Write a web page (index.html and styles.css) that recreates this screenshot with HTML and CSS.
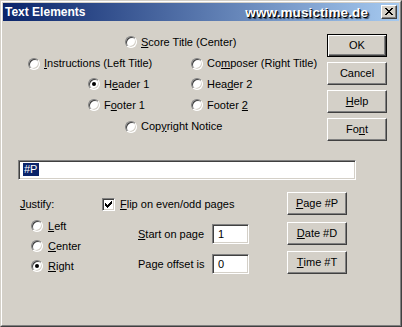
FILE: index.html
```html
<!DOCTYPE html>
<html lang="de">
<head>
    <meta charset="UTF-8">
    <meta name="viewport" content="width=device-width, initial-scale=1.0">
    <title>Text Elements</title>
    <link rel="stylesheet" href="styles.css">
</head>
<body>
    <div class="window">
        <div class="frame">
            <div class="title-bar">
                <span class="title">Text Elements</span>
                <span class="brand">www.musictime.de</span>
                <span class="close-btn">
                    <svg width="8" height="7" viewBox="0 0 8 7" shape-rendering="crispEdges">
                        <path d="M0 0h2v1h-2zM6 0h2v1h-2zM1 1h2v1h-2zM5 1h2v1h-2zM2 2h4v1h-4zM3 3h2v1h-2zM2 4h4v1h-4zM1 5h2v1h-2zM5 5h2v1h-2zM0 6h2v1h-2zM6 6h2v1h-2z" fill="#000"/>
                    </svg>
                </span>
            </div>

            <div class="client">
                <div class="top">
                    <div class="choices">
                        <label class="choice score"><span class="radio"></span><span><u>S</u>core Title (Center)</span></label>
                        <label class="choice instructions"><span class="radio"></span><span><u>I</u>nstructions (Left Title)</span></label>
                        <label class="choice composer"><span class="radio"></span><span>Co<u>m</u>poser (Right Title)</span></label>
                        <label class="choice header1"><span class="radio checked"></span><span>H<u>e</u>ader 1</span></label>
                        <label class="choice header2"><span class="radio"></span><span>Hea<u>d</u>er 2</span></label>
                        <label class="choice footer1"><span class="radio"></span><span>F<u>o</u>oter 1</span></label>
                        <label class="choice footer2"><span class="radio"></span><span>Footer <u>2</u></span></label>
                        <label class="choice copyright"><span class="radio"></span><span>Cop<u>y</u>right Notice</span></label>
                    </div>
                    <div class="actions">
                        <span class="btn default">OK</span>
                        <span class="btn">Cancel</span>
                        <span class="btn"><u>H</u>elp</span>
                        <span class="btn">Fo<u>n</u>t</span>
                    </div>
                </div>

                <div class="text-field"><span class="selection">#P</span></div>

                <div class="bottom">
                    <div class="justify">
                        <div class="group-label"><u>J</u>ustify:</div>
                        <label class="choice"><span class="radio"></span><span><u>L</u>eft</span></label>
                        <label class="choice"><span class="radio"></span><span><u>C</u>enter</span></label>
                        <label class="choice"><span class="radio checked"></span><span><u>R</u>ight</span></label>
                    </div>
                    <div class="options">
                        <label class="check-row">
                            <span class="checkbox">
                                <svg width="9" height="9" viewBox="0 0 9 9" shape-rendering="crispEdges">
                                    <path d="M1 3h1v3h-1zM2 4h1v3h-1zM3 5h1v3h-1zM4 4h1v3h-1zM5 3h1v3h-1zM6 2h1v3h-1zM7 1h1v3h-1z" fill="#000"/>
                                </svg>
                            </span>
                            <span><u>F</u>lip on even/odd pages</span>
                        </label>
                        <div class="field-row">
                            <span class="field-label"><u>S</u>tart on page</span>
                            <span class="small-field">1</span>
                        </div>
                        <div class="field-row">
                            <span class="field-label">Page offset is</span>
                            <span class="small-field">0</span>
                        </div>
                    </div>
                    <div class="stamps">
                        <span class="btn"><u>P</u>age #P</span>
                        <span class="btn"><u>D</u>ate #D</span>
                        <span class="btn"><u>T</u>ime #T</span>
                    </div>
                </div>
            </div>
        </div>
    </div>
</body>
</html>
```

FILE: styles.css
```css
body {
    margin: 0;
    padding: 0;
    background-color: #d4d0c8;
    font-family: "Liberation Sans", Arial, sans-serif;
    font-size: 11px;
    line-height: 13px;
    color: #000;
}

u {
    text-decoration-thickness: 1px;
    text-underline-offset: 1px;
}

/* window frame */
.window {
    width: 402px;
    height: 327px;
    box-sizing: border-box;
    border: 1px solid;
    border-color: #d4d0c8 #404040 #404040 #d4d0c8;
    background-color: #d4d0c8;
}
.frame {
    height: 100%;
    box-sizing: border-box;
    border: 1px solid;
    border-color: #fff #808080 #808080 #fff;
    padding: 1px;
    display: flex;
    flex-direction: column;
}
.title-bar {
    height: 18px;
    flex-shrink: 0;
    display: flex;
    align-items: center;
    padding: 0 2px;
    background: linear-gradient(to right, #0a246a, #a6caf0);
}
.title {
    color: #fff;
    font-weight: bold;
    font-size: 12px;
}
.brand {
    margin-left: auto;
    margin-right: 13px;
    color: #fff;
    font-weight: bold;
    font-size: 13.5px;
    letter-spacing: 0.1px;
    text-shadow: 1px 1px 0 #000, 2px 2px 1px rgba(0, 0, 0, 0.6);
}
.close-btn {
    width: 16px;
    height: 14px;
    box-sizing: border-box;
    display: flex;
    align-items: center;
    justify-content: center;
    background-color: #d4d0c8;
    border: 1px solid;
    border-color: #fff #404040 #404040 #fff;
    box-shadow: inset -1px -1px #808080;
    padding: 0 1px 1px 0;
}

/* client area */
.client {
    flex: 1;
}
.top {
    display: flex;
    align-items: flex-start;
}
.choices {
    display: grid;
    margin: 10px 0 0 25px;
    grid-template-columns: 60px 37px 66px auto;
    grid-template-rows: 22px 21px 20px 22px 21px;
}
.choice {
    display: flex;
    align-items: center;
    gap: 4px;
    white-space: nowrap;
}
.score { grid-column: 3 / span 2; grid-row: 1; }
.instructions { grid-column: 1 / span 3; grid-row: 2; }
.composer { grid-column: 4; grid-row: 2; }
.header1 { grid-column: 2 / span 2; grid-row: 3; }
.header2 { grid-column: 4; grid-row: 3; }
.footer1 { grid-column: 2 / span 2; grid-row: 4; }
.footer2 { grid-column: 4; grid-row: 4; }
.copyright { grid-column: 3 / span 2; grid-row: 5; }

.radio {
    position: relative;
    width: 12px;
    height: 12px;
    flex-shrink: 0;
    box-sizing: border-box;
    border-radius: 50%;
    background-color: #fff;
    border: 1px solid;
    border-color: #808080 #fff #fff #808080;
    box-shadow: inset 1px 1px 0 #404040, inset -1px -1px 0 #d4d0c8;
}
.radio.checked::after {
    content: "";
    position: absolute;
    left: 3px;
    top: 3px;
    width: 4px;
    height: 4px;
    border-radius: 50%;
    background-color: #000;
}

.actions {
    margin: 13px 12px 0 auto;
    display: flex;
    flex-direction: column;
    gap: 5px;
}
.btn {
    width: 60px;
    height: 23px;
    box-sizing: border-box;
    display: flex;
    align-items: center;
    justify-content: center;
    background-color: #d4d0c8;
    border: 1px solid;
    border-color: #fff #404040 #404040 #fff;
    box-shadow: inset -1px -1px 0 #808080;
}
.btn.default {
    border-color: #000;
    box-shadow: inset 1px 1px 0 #fff, inset -1px -1px 0 #404040, inset -2px -2px 0 #808080;
}

/* sunken text boxes */
.text-field,
.small-field {
    box-sizing: border-box;
    background-color: #fff;
    border: 1px solid;
    border-color: #808080 #fff #fff #808080;
    box-shadow: inset 1px 1px 0 #404040, inset -1px -1px 0 #d4d0c8;
}
.text-field {
    margin: 19px 0 0 15px;
    width: 338px;
    height: 20px;
    padding: 2px 0 0 4px;
}
.selection {
    display: inline-block;
    height: 13px;
    padding: 0 2px 0 1px;
    background-color: #0a246a;
    color: #fff;
}

.bottom {
    display: flex;
    align-items: flex-start;
}
.justify {
    width: 82px;
    margin-left: 17px;
    padding-top: 18px;
    display: flex;
    flex-direction: column;
}
.group-label {
    margin-bottom: 5px;
}
.justify .choice {
    height: 20px;
    margin-left: 11px;
    gap: 5px;
}
.options {
    width: 185px;
    padding-top: 18px;
    display: flex;
    flex-direction: column;
}
.check-row {
    display: flex;
    align-items: center;
    gap: 5px;
    height: 13px;
}
.checkbox {
    width: 13px;
    height: 13px;
    box-sizing: border-box;
    background-color: #fff;
    border: 1px solid;
    border-color: #808080 #fff #fff #808080;
    box-shadow: inset 1px 1px 0 #404040, inset -1px -1px 0 #d4d0c8;
    padding: 1px;
}
.checkbox svg {
    display: block;
}
.field-row {
    display: flex;
    align-items: center;
    margin-left: 36px;
    margin-top: 13px;
}
.field-row + .field-row {
    margin-top: 10px;
}
.field-label {
    width: 74px;
}
.small-field {
    width: 37px;
    height: 20px;
    padding: 3px 0 0 5px;
}
.stamps {
    padding-top: 12px;
    display: flex;
    flex-direction: column;
    gap: 6.5px;
}
```
